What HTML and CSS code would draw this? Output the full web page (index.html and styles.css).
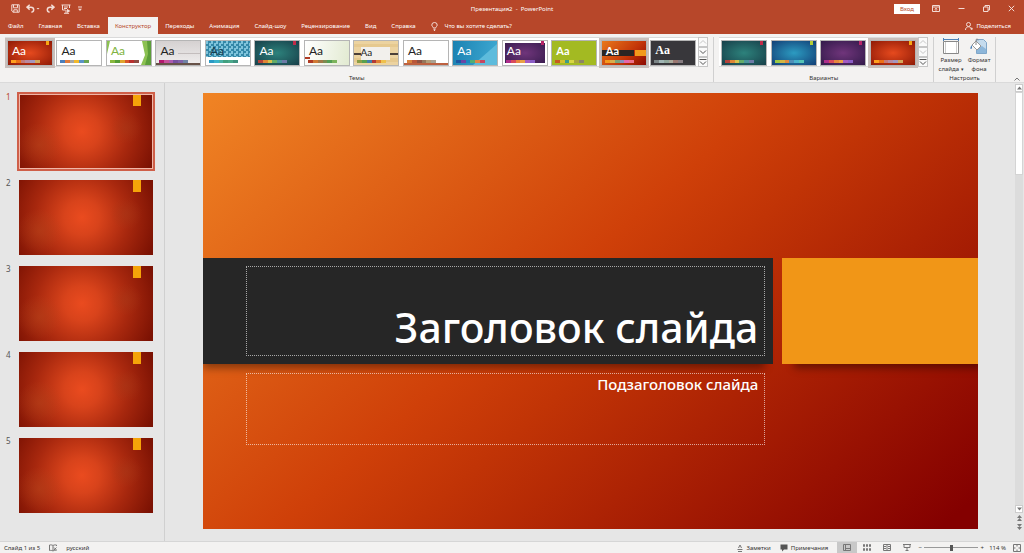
FILE: index.html
```html
<!DOCTYPE html>
<html lang="ru">
<head>
<meta charset="utf-8">
<title>Презентация2 - PowerPoint</title>
<link rel="stylesheet" href="styles.css">
</head>
<body>
<header class="top">
  <div class="titlebar">
    <div class="quick">
      <button aria-label="Сохранить"><svg width="9" height="9" viewBox="0 0 9 9"><path d="M.8.8h7.4v7.4H2L.8 7zM2.500.8v3h4v-3M2.800 8.200V5.800h3.500v2.400"/></svg></button>
      <button aria-label="Отменить"><svg width="14" height="9" viewBox="0 0 14 9"><path class="bold" d="M3.700.8L1 3.200l2.700 2.400M1 3.200h4c3.500 0 3.500 4.600.4 5"/><path class="solid" d="M10.500 4h3L12 5.500z"/></svg></button>
      <button aria-label="Повторить"><svg width="9" height="9" viewBox="0 0 9 9"><path class="bold" d="M5.300.8L8 3.200 5.300 5.600M8 3.200H4c-3.500 0-3.500 4.600-.4 5"/></svg></button>
      <button aria-label="Показ с начала"><svg width="10" height="10" viewBox="0 0 10 10"><path d="M.5 1h9M1.500 1v5h3M8.500 1v3M3 3h4M3 4.500h3M5 6v3M3 9.300h5"/><path class="solid" d="M6 4.800l3.400 2.100L6 9z"/></svg></button>
      <button aria-label="Настройка панели"><svg width="6" height="6" viewBox="0 0 6 6"><path d="M1 1h4"/><path class="solid" d="M1 2.800h4L3 5z"/></svg></button>
    </div>
    <h1 class="doc">Презентация2&nbsp; -&nbsp; PowerPoint</h1>
    <div class="window">
      <button class="login">Вход</button>
      <button aria-label="Параметры ленты"><svg width="8" height="7" viewBox="0 0 8 7"><path d="M.5.5h7v6h-7zM.5 2h7M4 5.800V3.300M2.800 4.400L4 3.200l1.200 1.200"/></svg></button>
      <button aria-label="Свернуть"><svg width="7" height="7" viewBox="0 0 7 7"><path d="M.5 3.500h6"/></svg></button>
      <button aria-label="Восстановить"><svg width="7" height="7" viewBox="0 0 7 7"><path d="M.5 2h4.500v4.500H.5zM2 2V.5h4.500V5H5"/></svg></button>
      <button aria-label="Закрыть"><svg width="7" height="7" viewBox="0 0 7 7"><path d="M.8.8l5.400 5.400M6.200.8L.8 6.200"/></svg></button>
    </div>
  </div>
  <nav class="tabs">
    <button>Файл</button>
    <button>Главная</button>
    <button>Вставка</button>
    <button class="active">Конструктор</button>
    <button>Переходы</button>
    <button>Анимация</button>
    <button>Слайд-шоу</button>
    <button>Рецензирование</button>
    <button>Вид</button>
    <button>Справка</button>
    <button class="tell"><svg width="7" height="9" viewBox="0 0 7 9"><path d="M2.300 6C2.300 4.800.8 4.500.8 3a2.700 2.500 0 0 1 5.400 0c0 1.500-1.500 1.800-1.500 3zM2.500 7.300h2M2.900 8.500h1.200"/></svg>Что вы хотите сделать?</button>
    <button class="share"><svg width="8" height="8" viewBox="0 0 8 8"><circle cx="3.500" cy="2.500" r="2"/><path d="M.5 8c0-4 5-4 5.500-1.500M5.500 6.800h2.300M6.700 5.600v2.300"/></svg>Поделиться</button>
  </nav>
</header>

<section class="ribbon">
  <div class="group themes">
    <div class="pick">
      <div class="row">
        <button class="thumb ember sel"><span class="aa">Aa</span><span class="strip"></span><span class="flag"></span></button>
        <button class="thumb office"><span class="aa">Aa</span><span class="strip"></span></button>
        <button class="thumb facet"><svg class="art" viewBox="0 0 44 24" preserveAspectRatio="none"><path fill="#8cc152" d="M38 0h6v24H34l4-10-3-14z"/><path fill="#5d9e3a" d="M40 0h4v24h-6l3-11z"/><path fill="#8cc152" d="M0 0h3L0 13z"/></svg><span class="aa">Aa</span><span class="strip"></span></button>
        <button class="thumb gallery"><svg class="art" viewBox="0 0 44 24" preserveAspectRatio="none"><path fill="#c3bdbd" d="M22 12h22v1H22z"/><path fill="#675248" d="M0 22h44v2H0z"/></svg><span class="aa">Aa</span><span class="strip"></span></button>
        <button class="thumb integral"><span class="aa">Aa</span><span class="strip"></span></button>
        <button class="thumb teal"><span class="aa">Aa</span><span class="strip"></span><span class="flag"></span></button>
        <button class="thumb wisp"><svg class="art" viewBox="0 0 44 24" preserveAspectRatio="none"><path fill="#b03a24" d="M0 16h5v2H0z"/></svg><span class="aa">Aa</span><span class="strip"></span></button>
        <button class="thumb wood"><svg class="art" viewBox="0 0 44 24" preserveAspectRatio="none"><path fill="#e6c98f" d="M0 3h44v3H0zM0 17h44v4H0z"/><path fill="#4b4038" d="M0 12h8v2H0zM35 12h9v2h-9z"/><path fill="#f2f0ec" d="M7 6h29v13H7z"/></svg><span class="aa low">Aa</span><span class="strip"></span></button>
        <button class="thumb retro"><svg class="art" viewBox="0 0 44 24" preserveAspectRatio="none"><path fill="#bd6140" d="M0 22h44v2H0z"/></svg><span class="aa">Aa</span><span class="strip"></span></button>
        <button class="thumb sky"><svg class="art" viewBox="0 0 44 24" preserveAspectRatio="none"><path fill="#5dbbdc" d="M44 3v21H20z"/></svg><span class="aa">Aa</span><span class="strip"></span></button>
        <button class="thumb violet framed"><span class="aa">Aa</span><span class="strip"></span><span class="flag"></span></button>
        <button class="thumb lime"><span class="aa bold">Aa</span><span class="strip"></span></button>
        <button class="thumb berlin sel"><svg class="art" viewBox="0 0 44 24" preserveAspectRatio="none"><path fill="#2a2523" d="M0 9h32v6H0z"/><path fill="#f39a1b" d="M33 9h11v6H33z"/></svg><span class="aa bold">Aa</span><span class="strip"></span></button>
        <button class="thumb slate"><span class="aa serif">Aa</span><span class="strip"></span></button>
      </div>
      <div class="spin">
        <button class="off" aria-label="Вверх"><svg width="8" height="4" viewBox="0 0 8 4"><path d="M1 3.500l3-3 3 3"/></svg></button>
        <button aria-label="Вниз"><svg width="8" height="4" viewBox="0 0 8 4"><path d="M1 .5l3 3 3-3"/></svg></button>
        <button aria-label="Все темы"><svg width="8" height="6" viewBox="0 0 8 6"><path d="M.5.5h7M1 2.500l3 3 3-3"/></svg></button>
      </div>
    </div>
    <div class="caption">Темы</div>
  </div>
  <div class="group variants">
    <div class="pick">
      <div class="row">
        <button class="thumb teal" aria-label="Вариант 1"><span class="strip"></span><span class="flag"></span></button>
        <button class="thumb blue" aria-label="Вариант 2"><span class="strip"></span><span class="flag"></span></button>
        <button class="thumb violet" aria-label="Вариант 3"><span class="strip"></span><span class="flag"></span></button>
        <button class="thumb ember sel" aria-label="Вариант 4"><span class="strip"></span><span class="flag"></span></button>
      </div>
      <div class="spin">
        <button class="off" aria-label="Вверх"><svg width="8" height="4" viewBox="0 0 8 4"><path d="M1 3.500l3-3 3 3"/></svg></button>
        <button class="off" aria-label="Вниз"><svg width="8" height="4" viewBox="0 0 8 4"><path d="M1 .5l3 3 3-3"/></svg></button>
        <button aria-label="Все варианты"><svg width="8" height="6" viewBox="0 0 8 6"><path d="M.5.5h7M1 2.500l3 3 3-3"/></svg></button>
      </div>
    </div>
    <div class="caption">Варианты</div>
  </div>
  <div class="group setup">
    <div class="tools">
      <button><svg width="18" height="17" viewBox="0 0 18 17"><path fill="#fff" stroke="#888" d="M1.500 3.500h15v12h-15z"/><path fill="none" stroke="#4d82b8" d="M1 1.500h16M1.500 0v3M16.500 0v3"/><path fill="none" stroke="#ccc" d="M3.500 4v11M14.500 4v11"/></svg><span>Размер<br>слайда <small>▾</small></span></button>
      <button><svg width="18" height="17" viewBox="0 0 18 17"><path fill="#c5dbed" stroke="#7fa6c9" d="M6.500 1.500h7l3 3v11h-10z"/><path fill="#8db6d9" d="M7 11l5-3 4 3v4H7z"/><path fill="#fff" stroke="#999" d="M2 7l4-4 5 5-4 4z"/><path fill="none" stroke="#888" d="M6 7V2.500c0-2 2-2 2 0"/><path fill="#4d82b8" d="M1.500 7c-1.500 3-1.500 4-.5 4s1.500-2 .5-4z"/></svg><span>Формат<br>фона</span></button>
    </div>
    <div class="caption">Настроить</div>
  </div>
  <button class="collapse" aria-label="Свернуть ленту"><svg width="6" height="4" viewBox="0 0 6 4"><path d="M.5 3.500L3 1l2.500 2.500"/></svg></button>
</section>

<main class="work">
  <ol class="slides">
    <li class="current"><span class="num">1</span><button class="mini" aria-label="Слайд 1"></button></li>
    <li><span class="num">2</span><button class="mini" aria-label="Слайд 2"></button></li>
    <li><span class="num">3</span><button class="mini" aria-label="Слайд 3"></button></li>
    <li><span class="num">4</span><button class="mini" aria-label="Слайд 4"></button></li>
    <li><span class="num">5</span><button class="mini" aria-label="Слайд 5"></button></li>
  </ol>
  <div class="canvas">
    <article class="slide">
      <div class="bar"><h2 class="box title">Заголовок слайда</h2></div>
      <div class="accent"></div>
      <p class="box sub">Подзаголовок слайда</p>
    </article>
  </div>
  <div class="scroll">
    <button aria-label="Вверх"><svg width="5" height="4" viewBox="0 0 5 4"><path d="M0 3.500h5L2.500.5z"/></svg></button>
    <div class="track"><div class="handle"></div></div>
    <button aria-label="Вниз"><svg width="5" height="4" viewBox="0 0 5 4"><path d="M0 .5h5L2.500 3.500z"/></svg></button>
    <button class="flat" aria-label="Предыдущий слайд"><svg width="5" height="6" viewBox="0 0 5 6"><path d="M0 3h5L2.500 0zM0 6h5L2.500 3z"/></svg></button>
    <button class="flat" aria-label="Следующий слайд"><svg width="5" height="6" viewBox="0 0 5 6"><path d="M0 0h5L2.500 3zM0 3h5L2.500 6z"/></svg></button>
  </div>
</main>

<footer class="status">
  <span>Слайд 1 из 5</span>
  <button aria-label="Правописание"><svg width="8" height="8" viewBox="0 0 8 8"><path d="M4 1.500C3 .8 1.500.8.500 1v5.500c1-.2 2.500-.2 3.500.5 1-.7 2-.7 3.500-.5M4 1.500V7M4 1.500C5 .8 6.500.8 7.500 1v1M5 3.500l2.500 2.500M7.500 3.500L5 6"/></svg></button>
  <button>русский</button>
  <div class="right">
    <button class="notes"><svg width="6" height="8" viewBox="0 0 6 8"><path d="M.5 5.500h5M1 7.500h4M1.500 4L3 1l1.500 3"/></svg>Заметки</button>
    <button class="comments"><svg width="8" height="8" viewBox="0 0 8 8"><path class="fill" d="M.5.5h7v5H4l-2 2v-2H.5z"/></svg>Примечания</button>
    <div class="views">
      <button class="on" aria-label="Обычный"><svg width="8" height="7" viewBox="0 0 8 7"><path d="M.5.5h7v6h-7zM2.500.5v6M2.500 4.500h5"/></svg></button>
      <button aria-label="Сортировщик"><svg width="8" height="7" viewBox="0 0 8 7"><path d="M.5.5h1v2h-1zM3.500.5h1v2h-1zM6.500.5h1v2h-1zM.5 4.500h1v2h-1zM3.500 4.500h1v2h-1zM6.500 4.500h1v2h-1z"/></svg></button>
      <button aria-label="Чтение"><svg width="8" height="7" viewBox="0 0 8 7"><path d="M.5.500h3.500v6H.5zM4 .5h3.500v6H4M1 2.500h2M5 2.500h2M1 4.500h2M5 4.500h2"/></svg></button>
      <button aria-label="Показ слайдов"><svg width="8" height="7" viewBox="0 0 8 7"><path d="M0 .5h8M1 .5v3h6v-3M4 3.500v3M2.500 6.500h3"/></svg></button>
    </div>
    <button class="zoomstep" aria-label="Уменьшить">−</button>
    <input class="zoom" type="range" min="0" max="100" value="50" aria-label="Масштаб">
    <button class="zoomstep" aria-label="Увеличить">+</button>
    <button class="percent">114 %</button>
    <button aria-label="По размеру окна"><svg width="8" height="8" viewBox="0 0 8 8"><path d="M.5.5h7v7h-7zM4 1v1.500M4 5.500V7M1 4h1.500M5.500 4H7"/></svg></button>
  </div>
</footer>
</body>
</html>
```
FILE: styles.css
```css
* { box-sizing: border-box; }

body {
  margin: 0;
  height: 100vh;
  display: flex;
  flex-direction: column;
  overflow: hidden;
  background: #e6e6e6;
  color: #333;
  font: 6px/10px "Noto Sans", "Open Sans", sans-serif;
}

button {
  margin: 0;
  padding: 0;
  border: 0;
  background: none;
  color: inherit;
  font: inherit;
  display: flex;
  align-items: center;
  justify-content: center;
}

h1, h2, p, ol { margin: 0; padding: 0; font-weight: normal; }

svg { display: block; flex: none; }

/* Title bar and tabs */
.top { background: #b7472a; color: #fff; }
.top svg { fill: none; stroke: #f3dcd5; stroke-width: 1; }
.top .bold { stroke-width: 1.5; }
.top .solid { fill: #f3dcd5; stroke: none; }

.titlebar {
  display: grid;
  grid-template-columns: 1fr auto 1fr;
  align-items: center;
  height: 17px;
}
.quick { display: flex; align-items: center; gap: 6px; padding-left: 11px; }
.doc { font-size: 6px; color: #fff; }
.window { display: flex; align-items: center; justify-content: flex-end; padding-right: 9px; }
.window button { margin-left: 18px; }
.window .login { width: 26px; height: 10px; background: #fff; color: #b7472a; }
.window .login + button { margin-left: 12px; }

.tabs { display: flex; height: 17px; padding-left: 1px; color: #fff; }
.tabs button { padding: 1px 8px 0 7px; white-space: nowrap; }
.tabs .active { background: #f3f2f1; color: #b7472a; padding: 1px 7px 0; }
.tabs .tell { gap: 7px; }
.tabs .share { margin-left: auto; gap: 3px; padding-right: 13px; }

/* Ribbon */
.ribbon {
  display: flex;
  height: 49px;
  padding-top: 3px;
  background: #f3f2f1;
  border-bottom: 1px solid #dadada;
}
.group { display: flex; flex-direction: column; justify-content: space-between; border-right: 1px solid #d0d0d0; }
.themes { flex: 715; }
.variants { flex: 219; }
.setup { flex: none; width: 62px; }
.caption { text-align: center; line-height: 7px; color: #333; }
.pick { display: flex; padding: 0 5px; }
.row {
  flex: 1;
  display: flex;
  justify-content: space-between;
  padding: 2px 2px 1px;
  background: #fff;
  border: 1px solid #dadada;
  border-width: 1px 0;
  height: 30px;
}
.spin { display: grid; grid-template-rows: 1fr 1fr 1fr; width: 10px; }
.spin button { border: 1px solid #c6c6c6; background: #fafafa; }
.spin svg { fill: none; stroke: #555; }
.spin .off svg { stroke: #c4c4c4; }

.thumb {
  position: relative;
  width: 46px;
  height: 26px;
  border: 1px solid #b5b5b5;
  background: #fff;
  background-clip: padding-box;
  color: #222;
}
.sel { outline: 2px solid #c9bfbb; }
.art { position: absolute; inset: 0; width: 100%; height: 100%; }
.aa { position: absolute; left: 4px; top: 3px; font: 12px/13px Lato, sans-serif; }
.aa.low { font-size: 10px; top: 5px; left: 6px; }
.aa.bold { font-weight: bold; font-size: 11px; }
.aa.serif { font-family: "Liberation Serif", serif; font-weight: bold; }
.strip {
  position: absolute;
  left: 3px;
  bottom: 2px;
  width: 29px;
  height: 3px;
  background: linear-gradient(90deg, var(--a) 17%, var(--b) 17% 33%, var(--c) 33% 50%, var(--d) 50% 67%, var(--e) 67% 83%, var(--f) 83%);
}
.flag { position: absolute; right: 3px; top: 0; width: 3px; height: 4px; background: var(--flag); }

.ember { --a: #ffa01e; --b: #ec7016; --c: #c67a78; --d: #b98aa0; --e: #a497bd; --f: #d3a75c; --flag: #f7a713; color: #fff; background-image: radial-gradient(#e64a1e, #8f1a06); }
.office { --a: #4a7ebb; --b: #e07b3b; --c: #a5a5a5; --d: #f2b92b; --e: #5b93c7; --f: #6ca551; }
.facet { --a: #88b83e; --b: #559c36; --c: #dfa52e; --d: #d9572b; --e: #b8302f; --f: #8d4b42; color: #7fb341; }
.gallery { --a: #b3186d; --b: #c8519b; --c: #ad5bb0; --d: #7750a0; --e: #8061a8; --f: #7184a5; background-image: linear-gradient(#d5d1d1, #f0eeee); }
.integral { --a: #2a9ac5; --b: #3bb3ca; --c: #4ab1a5; --d: #41a07f; --e: #4aa88a; --f: #3f917e; color: #173e50; background-image: linear-gradient(transparent 66%, #fff 66%), repeating-conic-gradient(#3488a8 0 25%, #7fc4dc 0 50%); background-size: auto, 5px 5px; }
.teal { --a: #b4423a; --b: #e08636; --c: #d6c24c; --d: #63ac68; --e: #4b949b; --f: #6d7aa7; --flag: #c22b49; color: #fff; background-image: radial-gradient(#2d827c, #173f49); }
.wisp { --a: #b03a24; --b: #d17a35; --c: #a37848; --d: #7d8b50; --e: #549e53; --f: #7cb45c; background-image: linear-gradient(100deg, #fff, #e2ead1); }
.wood { --a: #8a9e46; --b: #58a04f; --c: #447fa8; --d: #b23a37; --e: #dd7d33; --f: #efc14c; background-color: #ecd3a0; }
.retro { --a: #d8823c; --b: #b9573a; --c: #8d5142; --d: #94775b; --e: #b39d78; --f: #aaa292; }
.sky { --a: #1c58a3; --b: #6b45a4; --c: #1b87bf; --d: #51ae74; --e: #e08547; --f: #c74660; color: #fff; background-image: linear-gradient(100deg, #1b82b2, #3fa9d2); }
.violet { --a: #ad2e8b; --b: #d94a5c; --c: #e7873f; --d: #e9a146; --e: #a45bc2; --f: #8a5cc5; --flag: #b92569; color: #fff; background-image: radial-gradient(#70357b, #321a4a); }
.framed { box-shadow: inset 0 0 0 2px #fff; }
.lime { --a: #c75a1f; --b: #d2bf2d; --c: #3f9b87; --d: #d8d642; --e: #a8a43c; --f: #8c8467; color: #fff; background-color: #a3ba22; }
.berlin { --a: #f49a1c; --b: #d9ae4c; --c: #7da377; --d: #8c8eb9; --e: #e567ad; --f: #ec7089; color: #fff; background-image: linear-gradient(135deg, #e9781b, #c33508 60%, #8c0a02); }
.slate { --a: #7b8586; --b: #a1b6b5; --c: #90a79c; --d: #a9a99a; --e: #9a7770; --f: #857b80; color: #fff; background-color: #38373b; }
.blue { --a: #9cc944; --b: #d2b744; --c: #e08a41; --d: #5090b8; --e: #49b3cc; --f: #55c4b4; --flag: #b4ce35; background-image: radial-gradient(#2c9bc1, #123f76); }

.tools { display: flex; justify-content: center; gap: 4px; padding-top: 1px; }
.tools button { flex-direction: column; gap: 1px; line-height: 9px; }
.tools small { font-size: 5px; }
.collapse { width: 28px; flex: none; padding: 0 4px 1px 0; align-items: flex-end; justify-content: flex-end; }
.collapse svg { fill: none; stroke: #777; }

/* Work area */
.work { flex: 1; min-height: 0; display: flex; }
.slides {
  flex: none;
  width: 165px;
  list-style: none;
  display: flex;
  flex-direction: column;
  gap: 11px;
  padding: 11px 12px 0 6px;
  border-right: 1px solid #d0d0d0;
}
.slides li { display: flex; gap: 8px; align-items: flex-start; }
.num { width: 5px; font-size: 8px; line-height: 6px; color: #555; }
.current .num { color: #b7472a; }
.mini {
  flex: none;
  width: 134px;
  height: 75px;
  background:
    linear-gradient(#f5a409, #f5a409) 114px 0 / 8px 12px no-repeat,
    radial-gradient(circle at 15% 68%, #b8461c80 0, #b8461c00 18%),
    radial-gradient(circle at 80% 45%, #a8381880 0, #a8381800 14%),
    radial-gradient(circle at 47% 50%, #ea4b1f 0, #d8431b 22%, #a8280e 58%, #7c1203 95%);
}
.current .mini { outline: 2px solid #cf5f49; box-shadow: inset 0 0 0 1px #f0b7a8; }

.canvas { flex: 1; min-width: 0; padding: 10px 36px 0 38px; }
.slide {
  display: grid;
  grid-template: 165fr 106fr 165fr / 571fr 9fr 196fr;
  width: 100%;
  aspect-ratio: 16 / 9;
  overflow: hidden;
  background: linear-gradient(139deg, #f08424 0%, #cf4009 45%, #c13406 55%, #840000 97%);
  color: #fff;
}
.bar { grid-area: 2 / 1; display: flex; background: #262626; padding: 8px 8px 8px 43px; box-shadow: -4px 8px 8px -4px #0006; }
.accent { grid-area: 2 / 3; background: #f19617; box-shadow: 8px 8px 8px -4px #0006; }
.box { border: 1px dotted #ffffff99; text-align: right; }
.title { flex: 1; display: flex; align-items: flex-end; justify-content: flex-end; padding: 0 6px 4px; font-size: 41px; line-height: 48px; font-weight: 500; white-space: nowrap; }
.sub { grid-area: 3 / 1; height: 72px; margin: 9px 8px 0 43px; padding: 0 6px; font-size: 15px; line-height: 20px; font-weight: 500; }

.scroll { width: 10px; display: flex; flex-direction: column; padding: 1px 1px 10px; }
.scroll button { height: 8px; background: #fff; border: 1px solid #ccc; }
.scroll .flat { height: 9px; border: 0; background: none; }
.scroll svg { fill: #777; }
.track { flex: 1; background: #dcdcdc; }
.handle { height: 20%; background: #fff; border: 1px solid #d4d4d4; }

/* Status bar */
.status {
  display: flex;
  align-items: center;
  gap: 9px;
  height: 12px;
  padding: 0 3px 0 4px;
  background: #f3f2f1;
  border-top: 1px solid #d6d6d6;
}
.status svg { fill: none; stroke: #777; }
.status .fill { fill: #555; stroke: none; }
.right { display: flex; align-items: center; margin-left: auto; }
.notes, .comments { gap: 3px; margin-right: 9px; }
.views { display: flex; }
.views button { width: 20px; height: 11px; }
.views .on { background: #c8c8c8; }
.zoomstep { width: 6px; }
.zoom { appearance: none; width: 54px; height: 8px; margin: 0 1px; background: linear-gradient(#999, #999) center / 100% 1px no-repeat; }
.zoom::-webkit-slider-thumb { appearance: none; width: 3px; height: 6px; background: #555; }
.percent { margin: 0 7px 0 4px; }
```
